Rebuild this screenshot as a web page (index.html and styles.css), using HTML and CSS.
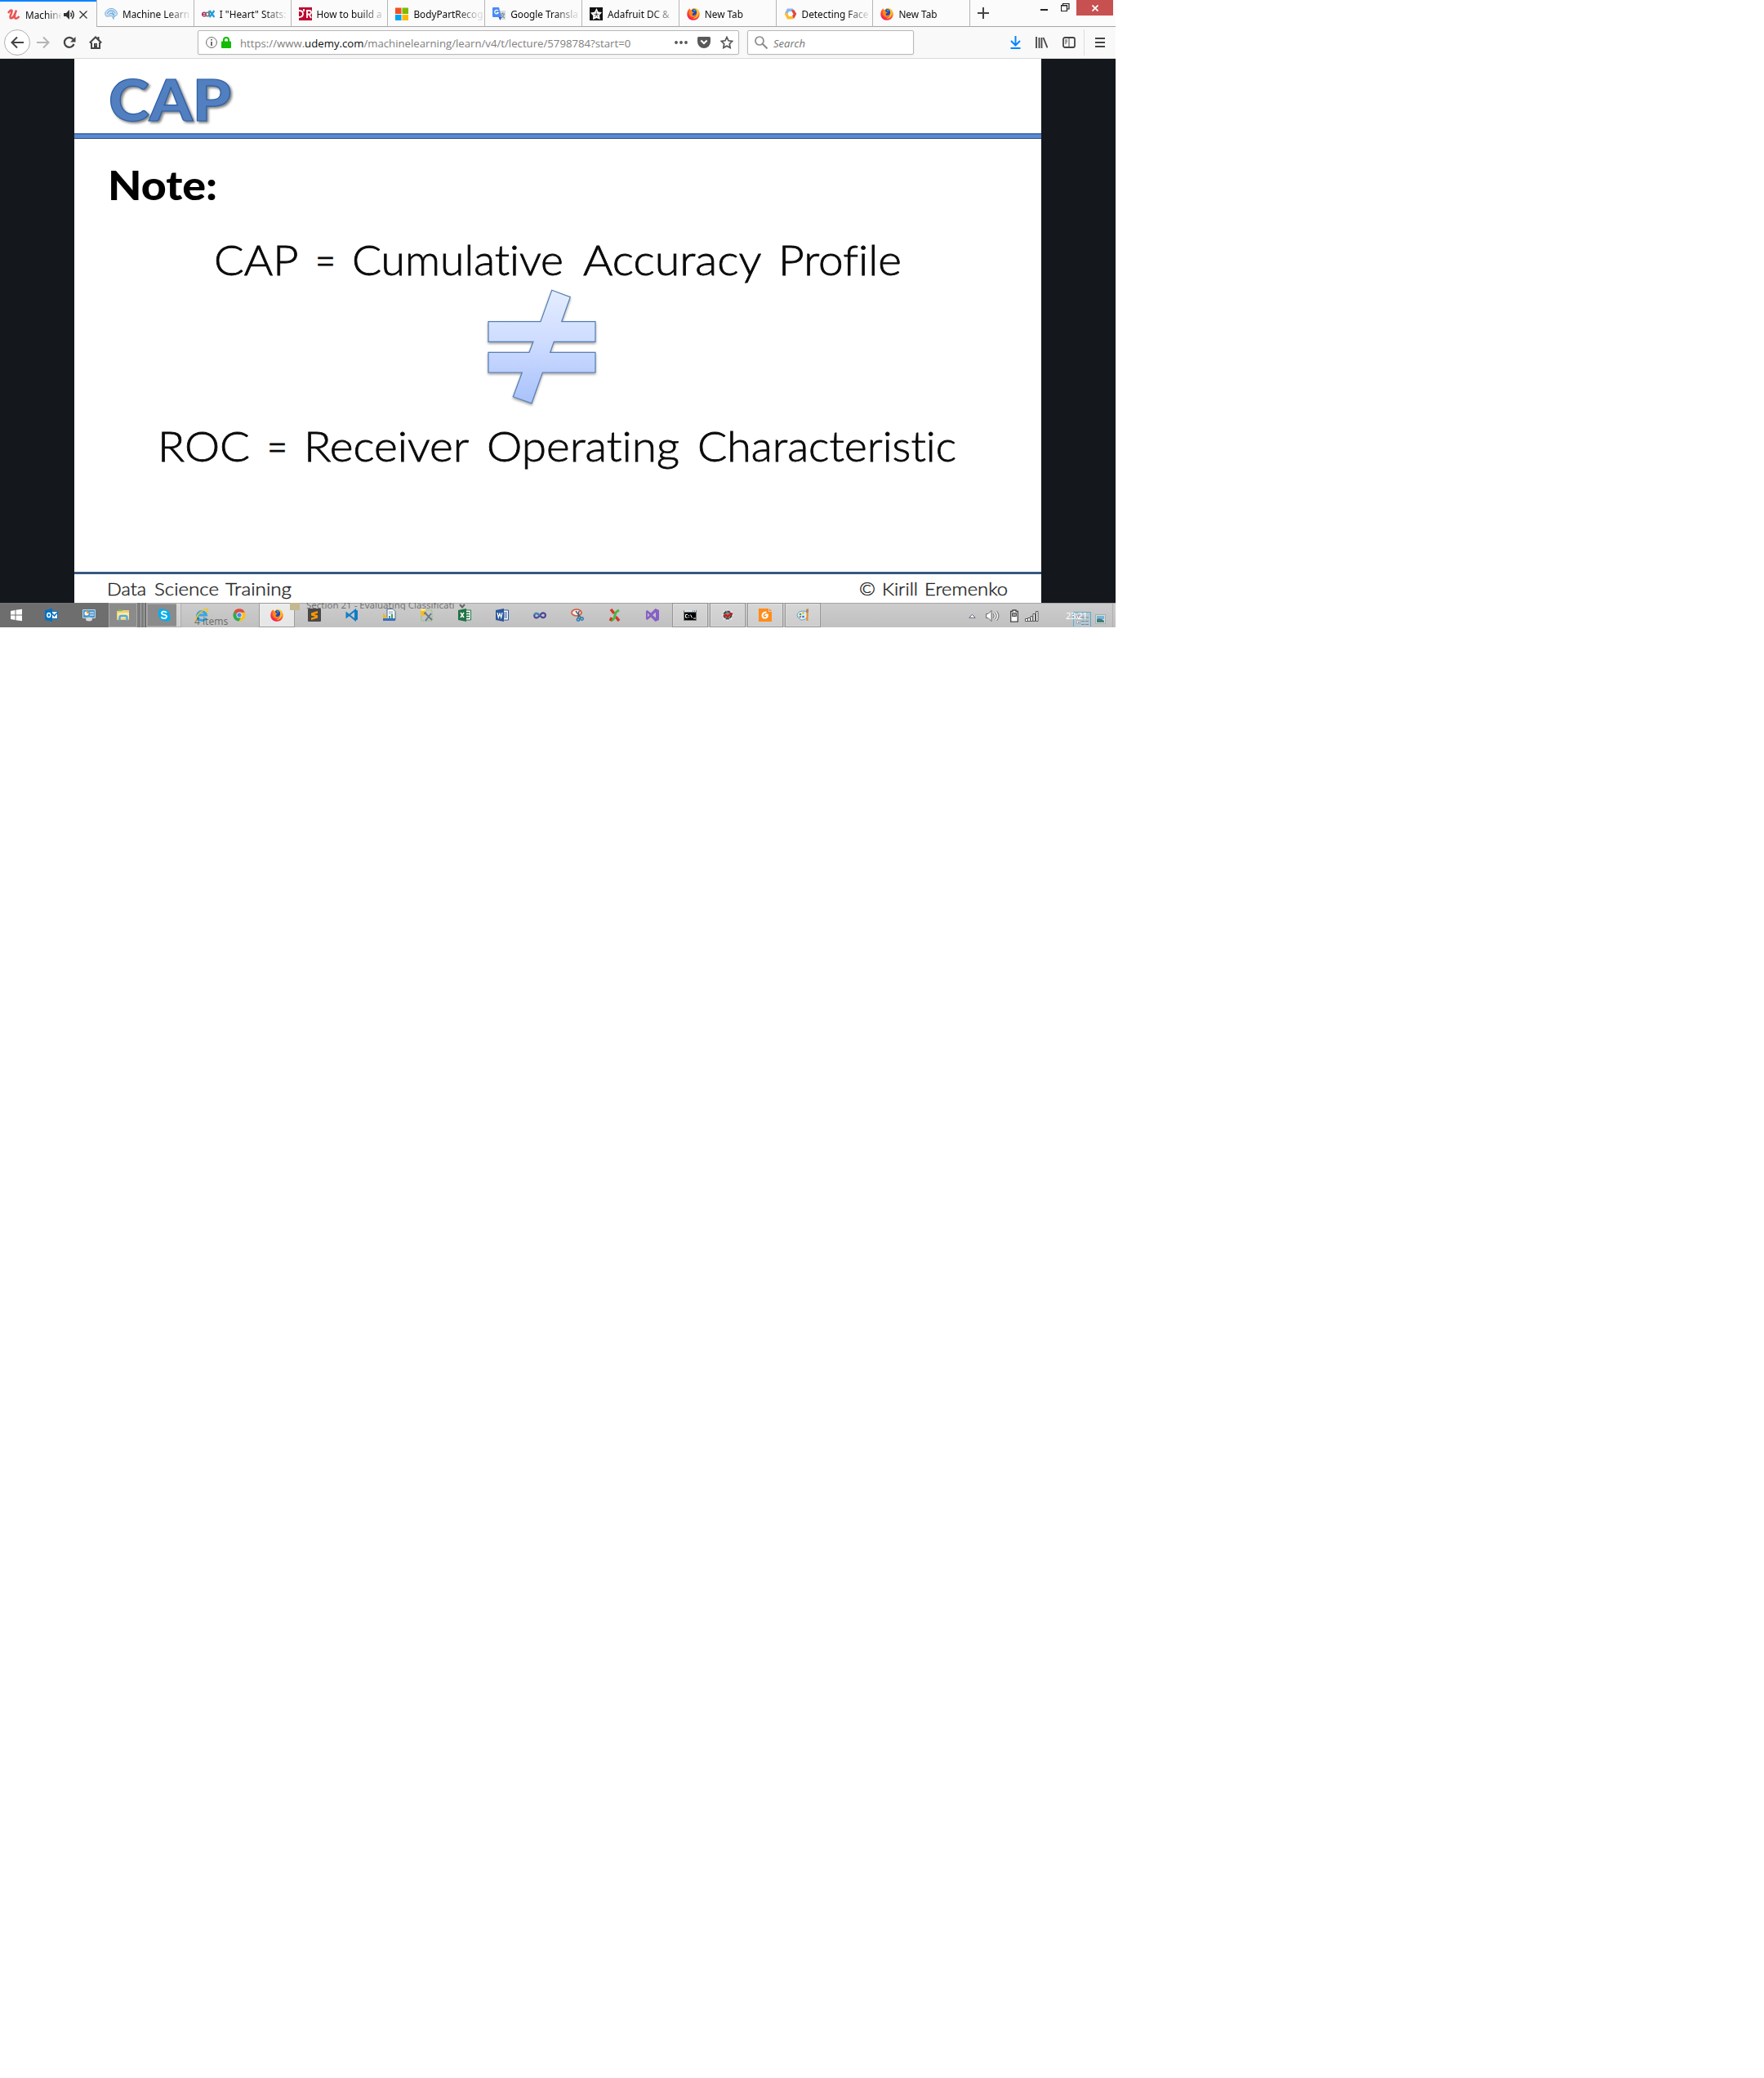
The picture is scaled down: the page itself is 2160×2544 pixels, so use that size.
FILE: index.html
```html
<!DOCTYPE html>
<html lang="en">
<head>
<meta charset="utf-8">
<title>Machine Learning</title>
<link rel="stylesheet" href="styles.css">
</head>
<body>
<svg class="defs" width="0" height="0" aria-hidden="true">
  <defs>
    <radialGradient id="fox" cx=".7" cy=".2" r=".9"><stop offset="0" stop-color="#ffe036"/><stop offset=".4" stop-color="#ff9a1c"/><stop offset=".75" stop-color="#ff3b35"/><stop offset="1" stop-color="#e2106a"/></radialGradient>
    <linearGradient id="ne" x1="0" y1="0" x2="0" y2="1"><stop offset="0" stop-color="#e4edff"/><stop offset=".45" stop-color="#cedcff"/><stop offset="1" stop-color="#a9c2fb"/></linearGradient>
    <symbol id="firefox" viewBox="0 0 16 16">
      <path fill="url(#fox)" d="M3.2 1.2 5 3.4 8 .8q6.800 0 7.700 6.400.3 5-3.200 7.200-4.500 2.700-9 .2Q-.2 12 .4 7 .8 3.800 2.200 2.800z"/>
      <path fill="#2846b4" d="M6 3.200Q9 .7 11.500 3.500q1.700 3.700-.8 6Q8 11.200 6 9.200z"/>
      <path fill="#25a5e8" d="M7.500 2.500q2.500-.6 3.500 2L8.500 5z"/>
      <path fill="#ff8a1a" d="M3 4.500 6.200 4l.5 1.500 2.300.8-2 1.300-.5 1.600Q8 10.700 10.300 9.600 9 12.500 6 11.500 2.500 10 3 4.500z"/>
      <path fill="#ffdb3b" d="M13 4q1.800 5-1.500 8.500-2 1.500-4 1.200Q14 11.500 13 4z"/>
    </symbol>
  </defs>
</svg>
<div class="screen">
  <header class="tabs">
    <div class="tab active">
      <svg class="fav" viewBox="0 0 16 16"><path d="M1 6Q4 1.500 5.500 3 6 4.500 3.800 9q-1 4 1.700 3.200Q8 11 9.500 6.500M11 2.500Q8.300 9 9 11.500q1.500 3 5.500-1.500" fill="none" stroke="#ec5252" stroke-width="2.500"/></svg>
      <span class="label">Machine</span>
      <svg class="sound" viewBox="0 0 14 14"><path d="M0 5h3l4-4v12L3 9H0z" fill="#333"/><path d="M8.500 4.500q2 2.500 0 5M10.200 2q4 5 0 10" fill="none" stroke="#333" stroke-width="1.500"/></svg>
      <svg class="close" viewBox="0 0 10 10"><path d="m.5.5 9 9m0-9-9 9" stroke="#333" stroke-width="1.300"/></svg>
    </div>
    <div class="tab"><svg class="fav" viewBox="0 0 16 16"><path d="M2 11Q-1 7 3 3.500 8-.5 13 3q4 4 1.500 7l-3 1-.5 3.500-2-4-5 .5z" fill="#cde3f5" stroke="#7fb1dd"/><path d="M3 8q1-4 5-4t5 3M5 9q2-3 5-1l2 4M9 6l3 3" fill="none" stroke="#5fa3da"/></svg><span class="label">Machine Learn</span></div>
    <div class="tab"><svg class="fav" viewBox="0 0 16 16"><circle cx="3" cy="8.500" r="2.300" fill="none" stroke="#b52a67" stroke-width="1.600"/><path d="M1 8.500h4" stroke="#b52a67"/><circle cx="7" cy="8.500" r="2.200" fill="none" stroke="#777" stroke-width="1.600"/><path d="M9 4v7" stroke="#777" stroke-width="1.500"/><path d="m9.500 4 6 8m0-8-6 8" stroke="#1c9fe0" stroke-width="2.400"/></svg><span class="label">I "Heart" Stats:</span></div>
    <div class="tab"><svg class="fav" viewBox="0 0 16 16"><path fill="#bd0a31" d="M0 0h16v16H0z"/><path d="M0 4q5 0 5 4t-5 4M6 2v3M10 13V4h3q2 0 2 2.300T12.500 8.500H10M12.500 8.500 15 13" fill="none" stroke="#fff" stroke-width="1.800"/></svg><span class="label">How to build a</span></div>
    <div class="tab"><svg class="fav" viewBox="0 0 16 16"><path fill="#f25022" d="M0 .5h7.500V8H0z"/><path fill="#7fba00" d="M8.500.5H16V8H8.500z"/><path fill="#00a4ef" d="M0 9h7.500v7H0z"/><path fill="#ffb900" d="M8.500 9H16v7H8.500z"/></svg><span class="label">BodyPartRecog</span></div>
    <div class="tab"><svg class="fav" viewBox="0 0 16 16"><path fill="#dcdcdc" d="M6 4h10v11H9z"/><path d="M10 8h5m-2.500-1.500V8m2 0q-1 4-4 5m.5-4q1 3 4 4" fill="none" stroke="#64879b"/><path fill="#4b8bf4" d="M0 1q0-1 1-1h7l3 12H1q-1 0-1-1z"/><path fill="#3551c9" d="M7.500 12H11l-1.500 4z"/><path d="M7 4.300A2.300 2.300 0 1 0 7.200 6.500H5" fill="none" stroke="#fff" stroke-width="1.200"/></svg><span class="label">Google Transla</span></div>
    <div class="tab"><svg class="fav" viewBox="0 0 16 16"><path fill="#111" d="M0 0h16v16H0z"/><path fill="#fff" d="m8.500 1 2 4.500L15 6l-3 3.700.8 5L8.500 13 4 15l.3-4.800L1 6.500 6 5.700z"/><circle cx="8.300" cy="8.600" r="1.300" fill="#444"/><path d="M8.300 7V4.500M7 9 5 8M9.700 9l2-1M7.500 10l-1 2M9 10l1 2" stroke="#555" stroke-width=".7"/></svg><span class="label">Adafruit DC &amp;</span></div>
    <div class="tab"><svg class="fav"><use href="#firefox"/></svg><span class="label">New Tab</span></div>
    <div class="tab"><svg class="fav" viewBox="0 0 16 16"><path d="M2.500 8 5 3.300h6" fill="none" stroke="#8ab4f0" stroke-width="3.400"/><path d="M10.500 3.300 13.400 8l-2.700 5" fill="none" stroke="#e04b3c" stroke-width="3.400"/><path d="M2 7.200 5.200 12.700H11" fill="none" stroke="#fbbf2d" stroke-width="3.400"/></svg><span class="label">Detecting Face</span></div>
    <div class="tab"><svg class="fav"><use href="#firefox"/></svg><span class="label">New Tab</span></div>
    <div class="newtab"><svg width="14" height="14" viewBox="0 0 14 14"><path d="M7 0v14M0 7h14" stroke="#444" stroke-width="2"/></svg></div>
    <div class="window">
      <svg width="9" height="24" viewBox="0 0 9 24"><path d="M0 12h9" stroke="#222" stroke-width="2"/></svg>
      <svg width="11" height="18" viewBox="0 0 11 18"><path d="M.5 6.500h7v7h-7zM.5 7h7M2.500 6V4.500h7.500v6.500H8" fill="none" stroke="#222" stroke-width="1.200"/></svg>
      <div class="quit"><svg width="8" height="8" viewBox="0 0 8 8"><path d="m.5.5 7 7m0-7-7 7" stroke="#fff" stroke-width="1.700"/></svg></div>
    </div>
  </header>
  <nav class="toolbar">
    <div class="back"><svg width="16" height="16" viewBox="0 0 16 16"><path d="M16 8H1.500M8 1.500 1.500 8 8 14.500" fill="none" stroke="#444" stroke-width="2"/></svg></div>
    <svg class="forward" width="16" height="16" viewBox="0 0 16 16"><path d="M0 8h14.500M8 1.500 14.500 8 8 14.500" fill="none" stroke="#b4b4b4" stroke-width="2"/></svg>
    <svg class="reload" width="16" height="16" viewBox="0 0 16 16"><path d="M12.500 4A6 6 0 1 0 13.500 10" fill="none" stroke="#444" stroke-width="2.300"/><path fill="#444" d="M15.500 1v6.500H9z"/></svg>
    <svg class="home" width="16" height="16" viewBox="0 0 16 16"><path d="m.8 8.500 7.200-7 7.200 7" fill="none" stroke="#444" stroke-width="2"/><path d="M3 8v7h10V8M11.500 1v4" fill="none" stroke="#444" stroke-width="2"/><path fill="#444" d="M6 9h4v6H6z"/><path fill="#ddd" d="M8 10.500h1v1H8z"/></svg>
    <div class="url">
      <svg class="info" width="14" height="14" viewBox="0 0 14 14"><circle cx="7" cy="7" r="6.400" fill="none" stroke="#666"/><path d="M7 3v1.600M7 6v5" stroke="#555" stroke-width="1.700"/></svg>
      <svg class="lock" width="12" height="14" viewBox="0 0 12 14"><path d="M3 7V4a3 3 0 0 1 6 0v3" fill="none" stroke="#12bc00" stroke-width="2"/><rect y="5.500" width="12" height="8.500" rx="1" fill="#12bc00"/></svg>
      <span class="address">https://www.<b>udemy.com</b>/machinelearning/learn/v4/t/lecture/5798784?start=0</span>
      <svg class="dots" width="16" height="4" viewBox="0 0 16 4"><g fill="#555"><circle cx="2" cy="2" r="1.900"/><circle cx="8" cy="2" r="1.900"/><circle cx="14" cy="2" r="1.900"/></g></svg>
      <svg class="pocket" width="16" height="14" viewBox="0 0 16 14"><path fill="#595959" d="M1.500 0h13q1.500 0 1.500 1.500V6a8 8 0 0 1-16 0V1.500Q0 0 1.500 0z"/><path d="m4.300 4.500 3.700 3.500 3.700-3.500" fill="none" stroke="#fff" stroke-width="2"/></svg>
      <svg class="star" width="16" height="16" viewBox="0 0 16 16"><path d="m8 1.500 2 4.300 4.700.6-3.400 3.300.8 4.800L8 12.200l-4.100 2.300.8-4.800L1.300 6.400 6 5.800z" fill="none" stroke="#555" stroke-width="1.700"/></svg>
    </div>
    <div class="search">
      <svg width="16" height="16" viewBox="0 0 16 16"><circle cx="6" cy="6" r="5" fill="none" stroke="#8b8b8b" stroke-width="1.700"/><path d="m9.500 9.500 6 6" stroke="#8b8b8b" stroke-width="2"/></svg>
      <span>Search</span>
    </div>
    <div class="tools">
      <svg width="13" height="16" viewBox="0 0 13 16"><path d="M6.500 0v11M1 6l5.500 5.500L12 6M.5 15h12" fill="none" stroke="#0a84ff" stroke-width="2"/></svg>
      <svg width="15" height="14" viewBox="0 0 15 14"><path d="M1 0v14M4.500 1v13M7.500 1v13M9.500 1l5 12.500" stroke="#444" stroke-width="1.800"/></svg>
      <svg width="16" height="14" viewBox="0 0 16 14"><rect x="1" y="1" width="14" height="12" rx="2" fill="none" stroke="#444" stroke-width="1.800"/><path d="M8 1v12M3 4h3M3 6h3M3 8h2" stroke="#444"/></svg>
    </div>
    <div class="menu"><svg width="12" height="12" viewBox="0 0 12 12"><path d="M0 1h12M0 6h12M0 11h12" stroke="#444" stroke-width="2"/></svg></div>
  </nav>
  <main class="stage">
    <article class="slide">
      <svg class="title" viewBox="91 72 1184 91"><text x="133" y="148" font-size="71" textLength="150" lengthAdjust="spacingAndGlyphs">CAP</text></svg>
      <div class="rule"></div>
      <svg class="note" viewBox="91 170 1184 110"><text x="132" y="244.500" font-size="50" textLength="134" lengthAdjust="spacingAndGlyphs">Note:</text></svg>
      <svg class="line" viewBox="91 280 1184 70">
        <text y="336.500"><tspan x="262" textLength="102" lengthAdjust="spacingAndGlyphs">CAP</tspan> <tspan x="386" textLength="25" lengthAdjust="spacingAndGlyphs">=</tspan> <tspan x="431" textLength="259" lengthAdjust="spacingAndGlyphs">Cumulative</tspan> <tspan x="714" textLength="217" lengthAdjust="spacingAndGlyphs">Accuracy</tspan> <tspan x="953" textLength="151" lengthAdjust="spacingAndGlyphs">Profile</tspan></text>
      </svg>
      <svg class="noteq" viewBox="91 350 1184 150"><path d="m675.700 355.300 22.600 8.400-10.600 30H729v24.600h-50.700l-4.600 13H729V456h-64.700L651 493.700l-22.700-8L639.300 456H598v-24.700h50l5-13h-55v-24.600h64z" fill="url(#ne)" stroke="#557fb4" stroke-width="1.200"/></svg>
      <svg class="line second" viewBox="91 500 1184 100">
        <text y="564.500"><tspan x="193" textLength="113" lengthAdjust="spacingAndGlyphs">ROC</tspan> <tspan x="327" textLength="25" lengthAdjust="spacingAndGlyphs">=</tspan> <tspan x="372" textLength="201" lengthAdjust="spacingAndGlyphs">Receiver</tspan> <tspan x="596" textLength="236" lengthAdjust="spacingAndGlyphs">Operating</tspan> <tspan x="854" textLength="317" lengthAdjust="spacingAndGlyphs">Characteristic</tspan></text>
      </svg>
      <footer class="credits">
        <svg viewBox="91 703 1184 35"><text y="729"><tspan x="131" textLength="48" lengthAdjust="spacingAndGlyphs">Data</tspan> <tspan x="189" textLength="79" lengthAdjust="spacingAndGlyphs">Science</tspan> <tspan x="276" textLength="81" lengthAdjust="spacingAndGlyphs">Training</tspan> <tspan x="1052" textLength="20" lengthAdjust="spacingAndGlyphs">©</tspan> <tspan x="1080" textLength="44" lengthAdjust="spacingAndGlyphs">Kirill</tspan> <tspan x="1132" textLength="102" lengthAdjust="spacingAndGlyphs">Eremenko</tspan></text></svg>
      </footer>
    </article>
  </main>
  <footer class="taskbar">
    <div class="slot start"><svg viewBox="0 0 16 16"><path fill="#fff" d="m1 3 5.500-1v5.500H1zM7.500 1.800 15 .8v6.700H7.500zM1 8.500h5.500V14L1 13zM7.500 8.500H15v6.800l-7.500-1z"/></svg></div>
    <div class="slot"><svg viewBox="0 0 16 16"><path fill="#fff" stroke="#0072c6" d="M8 3.500h7.500v9H8z"/><path d="m9 6 2.500 3L15 5" fill="none" stroke="#0072c6" stroke-width="1.500"/><path fill="#0072c6" d="m0 2 9-2v16l-9-2z"/><ellipse cx="4.800" cy="8" rx="2" ry="2.600" fill="none" stroke="#fff" stroke-width="1.500"/></svg></div>
    <div class="slot"><svg viewBox="0 0 16 16"><path fill="#4d96cf" stroke="#b8d9ee" d="M.5 1.500h15v10H.5z"/><circle cx="5" cy="6" r="2.500" fill="#fff"/><path fill="#f39b24" d="M5 6V3a3 3 0 0 1 3 3z"/><path d="M9 5h5M9 8h5" stroke="#fff"/><ellipse cx="8" cy="13" rx="4" ry="2.500" fill="#d8d8d8"/></svg></div>
    <div class="slot box stack"><svg viewBox="0 0 16 16"><path fill="#edcd75" d="M0 3h6l1-1h8v12H0z"/><path fill="#f9e9a8" d="M1 5h14v7H1z"/><path fill="#6bc04b" d="M2 1h4v2H2z"/><path d="M3.500 15v-4q0-2 2-2h5q2 0 2 2v4" fill="none" stroke="#55a8d8" stroke-width="2.400"/></svg></div>
    <div class="slot box"><svg viewBox="0 0 16 16"><path fill="#00aff0" d="M1 5Q0 1 4 .5q2-.5 3.500.5 6-.3 7.500 6 0 1.500 0 2.500 2 3-1 5.500-2 1.500-4.500 0Q2.500 15.500 1.500 9 1 7 1 5z"/><path d="M11 5Q9.500 3.200 7 3.700 4.500 4.300 5 6q.3 1.200 3 1.700 3.300.6 3 2.500-.7 2.200-3.500 2-2.200-.2-3-2" fill="none" stroke="#fff" stroke-width="1.800"/></svg></div>
    <div class="slot"><svg viewBox="0 0 16 16"><path d="M13 11.500A5.500 5.500 0 1 1 13.500 8H4" fill="none" stroke="#38a6e3" stroke-width="3"/><path d="M1.500 15Q-1 13 5 6q7-6.500 10-5 1 1-1 4" fill="none" stroke="#f6c419" stroke-width="1.500"/></svg><span class="ghost items">4 items</span></div>
    <div class="slot"><svg viewBox="0 0 16 16"><circle cx="8" cy="8" r="7.500" fill="#fbc116"/><path fill="#dd4b3e" d="M8 8 1.300 4.500A7.500 7.500 0 0 1 14.800 4.700H8z"/><path fill="#2da94f" d="m8 8-6.700-3.500A7.500 7.500 0 0 0 7.500 15.500L10.500 10z"/><circle cx="8" cy="8" r="3.500" fill="#fff"/><circle cx="8" cy="8" r="2.700" fill="#4688f1"/></svg></div>
    <div class="slot box bright"><svg><use href="#firefox"/></svg></div>
    <div class="slot"><svg viewBox="0 0 16 16"><rect width="16" height="16" rx="1" fill="#484848"/><path fill="#ff9800" d="m12 3-8 2.500v3L9 10l-5 1.500V14l8-2.500V8.300L7.500 7 12 5.700z"/></svg><span class="ghost section"><i></i>Section 21 - Evaluating Classificati<svg viewBox="0 0 8 8"><path d="m1 2 3 3.500L7 2" fill="none" stroke="#666" stroke-width="2"/></svg></span></div>
    <div class="slot"><svg viewBox="0 0 16 16"><path d="M12 2v12L1.500 5.500v5z" fill="none" stroke="#0f7dc8" stroke-width="2"/><path fill="#0f7dc8" d="m11.500 1 3.500 1.500v11L11.500 15z"/></svg></div>
    <div class="slot"><svg viewBox="0 0 16 16"><path fill="#f8f8f8" stroke="#4a6b8c" d="M5 .5h7l3 3v10H5z"/><path d="M7 4h5M7 6h5" stroke="#85aac7"/><path fill="#3f8ad0" d="M7 9h2v4H7z"/><path fill="#45a448" d="M10 7h2v6h-2z"/><path fill="#e8ba2e" d="M0 5.500 8 14H0z"/><path fill="#356fc2" d="M0 12h15v3H0z"/></svg></div>
    <div class="slot"><svg viewBox="0 0 16 16"><path fill="none" stroke="#6cc53f" stroke-dasharray="1 1" d="M1 2h13v13H1z"/><rect y="0" width="6" height="9" rx="2" fill="#f4bd28"/><ellipse cx="3" cy="1.500" rx="3" ry="1.200" fill="#fff1a5"/><path d="m6 6 8 8M13 6l-7 9" stroke="#69798d" stroke-width="2"/><path d="m4 6 3-1" stroke="#777" stroke-width="2"/></svg></div>
    <div class="slot"><svg viewBox="0 0 16 16"><path fill="#fff" stroke="#217346" d="M8 2h7.500v12H8z"/><path d="M10 5h4M10 8h4M10 11h4" stroke="#217346" stroke-width="1.500"/><path fill="#217346" d="m0 2 10-2v16L0 14z"/><path d="m3 5 4 6m0-6-4 6" stroke="#fff" stroke-width="1.500"/></svg></div>
    <div class="slot"><svg viewBox="0 0 16 16"><path fill="#fff" stroke="#2b579a" d="M8 2h7.500v12H8z"/><path d="M10 5h4M10 7h4M10 9h4M10 11h4" stroke="#2b579a"/><path fill="#2b579a" d="m0 2 10-2v16L0 14z"/><path d="m2 5 1.300 6L5 6l1.700 5L8 5" fill="none" stroke="#fff" stroke-width="1.200"/></svg></div>
    <div class="slot"><svg viewBox="0 0 16 16"><path d="M8 8.500Q3 3.500 1.300 8q-.3 4 3.200 3.300Q6 11 8 8.500q3-4.500 5.800-2.500Q16 8 14 10.500q-2.500 2-6-2z" fill="none" stroke="#4b4897" stroke-width="2.200"/><path d="M8 8.500Q3 3.500 1.300 8" fill="none" stroke="#3e87b7" stroke-width="2.200"/></svg></div>
    <div class="slot"><svg viewBox="0 0 16 16"><ellipse cx="7" cy="5" rx="6" ry="4" fill="#eee" stroke="#d85a3b" stroke-width="1.700"/><path d="m6 3 6 8m-2-8-1 8" stroke="#4f606d" stroke-width="1.500"/><circle cx="13.500" cy="12.500" r="1.700" fill="none" stroke="#227ab4" stroke-width="1.500"/><circle cx="9" cy="13.500" r="1.700" fill="none" stroke="#227ab4" stroke-width="1.500"/></svg></div>
    <div class="slot"><svg viewBox="0 0 16 16"><path d="m3 1 4 5M9 10l4 5" stroke="#d73527" stroke-width="3.500"/><path d="M3 15q5-2 5-7 .5-4 5-6" fill="none" stroke="#49b749" stroke-width="3"/><path d="m2 15 2-4" stroke="#d73527" stroke-width="3"/></svg></div>
    <div class="slot"><svg viewBox="0 0 16 16"><path fill="#8661c5" fill-rule="evenodd" d="m11.500 0 4.500 2v12l-4.500 2L6 10.500 1.500 14 0 13V3l1.500-1L6 5.500zM2 5.500v5L4.200 8zM12 4.500 8.200 8l3.800 3.500z"/></svg></div>
    <div class="slot box"><svg viewBox="0 0 16 16"><path fill="#000" stroke="#777" d="M.5 2.500h15v12H.5z"/><path fill="#d8e5ec" d="M1 2h14v2.500H1z"/><path d="M11 3h1M13 3h1" stroke="#456"/><path d="M5 7.500H2.500v3.500H5M6.500 8v1M6.500 10v1M8.500 7.500l2 4M12 12h3" fill="none" stroke="#fff"/></svg></div>
    <div class="slot box"><svg viewBox="0 0 16 16"><path d="M8 1v14M1 8h14M3 3l10 10m0-10L3 13" stroke="#eee" stroke-width="2"/><circle cx="8" cy="8" r="4.500" fill="#888" stroke="#444" stroke-width="2" stroke-dasharray="4 1"/><path d="m3 9 3-1 2 2 4-4 2 1" fill="none" stroke="#d01919" stroke-width="2.200"/></svg></div>
    <div class="slot box"><svg viewBox="0 0 16 16"><path fill="#ff8c1a" d="M0 0h12v4h4v12H0z"/><path fill="#ff8c1a" d="m13 0 3 3h-3z"/><path d="M9.500 4.500q-4.500 0-5 4 .5 3.500 4 3 2.500-.8 2.300-4Q8 7 8 9" fill="none" stroke="#fff" stroke-width="2"/></svg></div>
    <div class="slot box"><svg viewBox="0 0 16 16"><path fill="#d9edf4" stroke="#6e9fb5" d="M1 8q1-5 8-5 5 .5 5 5-1 6-7 6-3 0-3-2T2 11z"/><circle cx="5" cy="7" r="1.300" fill="#48a842"/><circle cx="8.500" cy="5.500" r="1.200" fill="#e6b319"/><circle cx="5" cy="10" r="1" fill="#d9402e"/><circle cx="8.500" cy="10" r="1.300" fill="#316fc0"/><path d="M13.500 5v10" stroke="#ed8b22" stroke-width="2"/><path d="m12 1 3-1v5h-3z" fill="#b58a60"/></svg></div>
    <div class="tray">
      <svg width="9" height="6" viewBox="0 0 9 6"><path fill="#fff" stroke="#667" d="m.8 5.300 3.700-4 3.700 4z"/></svg>
      <svg class="vol" width="17" height="16" viewBox="0 0 17 16"><path fill="#fff" stroke="#666" d="M.5 5.500H3l4-4v13l-4-4H.5z"/><path d="M9 5q2.500 3 0 6M11 3.500q4 4.500 0 9M13.500 2q5 6 0 12" fill="none" stroke="#777"/><path d="M10 4.500q3.500 3.500 0 7M12.300 3q4.500 5 0 10" fill="none" stroke="#fff"/></svg>
      <svg class="batt" width="10" height="16" viewBox="0 0 10 16"><path fill="#fff" stroke="#444" stroke-width="1.300" d="M3 1h4v1.500h2.300v12.700H.7V2.500H3z"/><path fill="#999" stroke="#555" d="M2.500 4.500h5v4h-5z"/></svg>
      <svg class="bars" width="17" height="13" viewBox="0 0 17 13"><path fill="#fff" stroke="#555" d="M.5 9.500h3v3h-3zM3.500 8.500h3v4h-3zM7 6.500h2.500v6H7zM10 3.500h2.500v9H10zM13.500.5H16v12h-2.500z"/></svg>
      <span class="clock">23:21</span>
      <span class="views"><svg width="22" height="18" viewBox="0 0 22 18"><path fill="#b3c7d0" stroke="#62a9c9" d="M.5.500h21V19H.5z"/><path fill="#eee" stroke="#999" stroke-width=".7" d="M4.500 4.500h4v4h-4zM4.500 10.500h4v4h-4z"/><path fill="#d5583c" d="M6 5.500h1.500V7H6z"/><path fill="#397fc2" d="M6 12h1.500v1.500H6z"/><path d="M10 7h4m1 0h4M10 11.500h4m1 0h4M10 15.500h4m1 0h4" stroke="#7b8992"/></svg><svg width="13" height="12" viewBox="0 0 13 12"><path fill="#ddd" stroke="#9badb7" d="M.5.5h12v11H.5z"/><path fill="#72b5dc" d="M2 2h9v4H2z"/><path fill="#427f76" d="M2 6q5-2 9 2v2H2z"/></svg></span>
    </div>
  </footer>
</div>
</body>
</html>
```
FILE: styles.css
```css
* { box-sizing: border-box; }
body { margin: 0; background: #fff; font-family: "Noto Sans", "Open Sans", sans-serif; }
svg { display: block; flex: none; }
.defs { position: absolute; }
.screen { width: 1366px; height: 768px; display: flex; flex-direction: column; overflow: hidden; }
.screen > * { flex: none; }

.tabs { display: flex; width: 1366px; height: 33px; background: #fbfbfb; }
.tab { flex: none; width: 118.8px; height: 33px; display: flex; align-items: center; padding: 1px 2px 0 9px; border-left: 1px solid #b5b5b5; border-bottom: 1px solid #a6a6a6; font-size: 11.8px; color: #0c0c0d; }
.tab.active { width: 118px; border-left: 0; border-bottom: 0; border-top: 2px solid #0a84ff; padding: 0 11px 0 9px; background: #f9f9fa; }
.fav { width: 16px; height: 16px; margin-right: 6px; }
.label { flex: 1; min-width: 0; overflow: hidden; white-space: nowrap; -webkit-mask-image: linear-gradient(to right, #000 54px, rgba(0, 0, 0, .15) 80px); mask-image: linear-gradient(to right, #000 54px, rgba(0, 0, 0, .15) 80px); }
.active .label { flex: 0 0 44px; -webkit-mask-image: linear-gradient(to right, #000 26px, transparent 46px); mask-image: linear-gradient(to right, #000 26px, transparent 46px); }
.sound { width: 14px; height: 14px; margin-left: 3px; }
.close { width: 10px; height: 10px; margin-left: 5px; }
.newtab { flex: none; width: 32px; display: flex; align-items: center; justify-content: center; border-left: 1px solid #b5b5b5; border-bottom: 1px solid #a6a6a6; }
.window { flex: 1; display: flex; align-items: flex-start; justify-content: flex-end; border-bottom: 1px solid #a6a6a6; padding-right: 3px; }
.window > svg:first-child { margin-right: 16px; }
.window > svg:nth-child(2) { margin-right: 8px; }
.quit { width: 45px; height: 19px; display: flex; align-items: center; justify-content: center; background: #c75050; }

.toolbar { display: flex; align-items: center; width: 1366px; height: 39px; background: #f9f9fa; border-bottom: 1px solid #dadada; }
.back { width: 32px; height: 32px; margin-left: 5px; border: 1px solid #b1b1b1; border-radius: 50%; background: #fff; display: flex; align-items: center; justify-content: center; }
.forward { margin-left: 8px; }
.reload { margin-left: 16px; }
.home { margin-left: 16px; }
.url, .search { height: 30px; display: flex; align-items: center; background: #fff; border: 1px solid #b8b8b8; border-radius: 2px; box-shadow: 0 1px 3px rgba(0, 0, 0, .06); }
.url { width: 663px; margin-left: 117px; padding: 0 6px 0 9px; }
.lock { margin: -1px 0 0 5px; }
.address { flex: 1; margin-left: 11px; padding-top: 1px; font-family: "Open Sans", sans-serif; font-size: 13.2px; white-space: nowrap; color: #808080; }
.address b { font-weight: 400; color: #0c0c0d; }
.pocket { margin: 0 12px; }
.search { width: 204px; margin-left: 10px; padding-left: 8px; font: italic 13px "Open Sans", sans-serif; color: #737373; }
.search span { margin-left: 7px; padding-top: 1px; }
.tools { display: flex; align-items: center; gap: 18px; margin-left: auto; margin-right: 10px; }
.menu { height: 32px; display: flex; align-items: center; padding: 0 13px; border-left: 1px solid #ddd; }

.stage { height: 666px; background: #14171c; display: flex; justify-content: center; }
.slide { width: 1184px; height: 666px; display: flex; flex-direction: column; background: #fff; }
.slide svg { width: 1184px; font-family: Lato, sans-serif; font-variant-ligatures: none; }
.title { height: 91px; font-weight: 900; fill: #527fc0; stroke: #2c60a5; stroke-width: 1.2px; filter: drop-shadow(2px 2px 1.5px rgba(0, 0, 0, .5)); }
.rule { height: 7px; background: #5b8ad5; border-top: 2px solid #4c70a8; border-bottom: 1px solid #2e4d85; }
.note { height: 110px; font-weight: 900; }
.line { height: 70px; font-size: 51px; font-weight: 300; fill: #0a0a0a; stroke: #0a0a0a; stroke-width: .8px; }
.line.second { height: 100px; }
.noteq { height: 150px; filter: drop-shadow(0 2px 1.5px rgba(0, 0, 0, .35)); }
.credits { margin-top: auto; height: 38px; border-top: 3px solid #36597f; }
.credits svg { height: 35px; font-size: 22px; font-weight: 300; fill: #222; stroke: #222; stroke-width: .4px; }

.taskbar { position: relative; width: 1366px; height: 30px; display: flex; background: linear-gradient(to right, #6e6e6e 216px, transparent 216px), linear-gradient(#cdcdcd, #c0c0c0); box-shadow: inset 0 1px rgba(120, 120, 120, .45); }
.slot { position: relative; flex: none; width: 46px; height: 30px; display: flex; align-items: center; justify-content: center; }
.slot > svg { width: 16px; height: 16px; }
.start { width: 40px; }
.box::before { content: ""; position: absolute; inset: 0 1px; border: 1px solid rgba(130, 130, 130, .75); background: rgba(255, 255, 255, .2); box-shadow: inset 0 0 0 1px rgba(255, 255, 255, .2); }
.box > svg { position: relative; }
.slot:nth-child(5)::before { border-color: #aaa; right: 2px; }
.stack::before { right: 10px; border-color: #aaa; box-shadow: 4px 0 #7c7c7c, 5px 0 #aaa, 8px 0 #7c7c7c, 9px 0 #aaa; }
.stack { padding-right: 8px; }
.bright::before { background: rgba(255, 255, 255, .6); }
.ghost { position: absolute; white-space: nowrap; font-size: 12px; line-height: 14px; color: rgba(50, 50, 50, .6); }
.items { left: 14px; top: 16px; }
.section { left: 13px; top: -4px; height: 13px; display: flex; font-size: 11.5px; clip-path: inset(4px -40px 0 -25px); }
.section i { position: absolute; left: -20px; top: 4px; width: 12px; height: 9px; background: #c3b88e; }
.section svg { width: 8px; height: 8px; margin: 4px 0 0 5px; }

.tray { flex: 1; position: relative; display: flex; align-items: center; padding: 2px 0 0 180px; }
.tray::after { content: ""; position: absolute; right: 3px; top: 1px; bottom: 0; border-left: 1px solid #b0b0b0; }
.vol { margin-left: 12px; }
.batt { margin-left: 13px; }
.bars { margin-left: 8px; }
.clock { position: relative; z-index: 1; margin-left: 33px; font-size: 11px; letter-spacing: -.4px; line-height: 14px; color: #fff; }
.views { position: absolute; left: 308px; top: 11px; display: flex; gap: 5px; align-items: center; }
```
